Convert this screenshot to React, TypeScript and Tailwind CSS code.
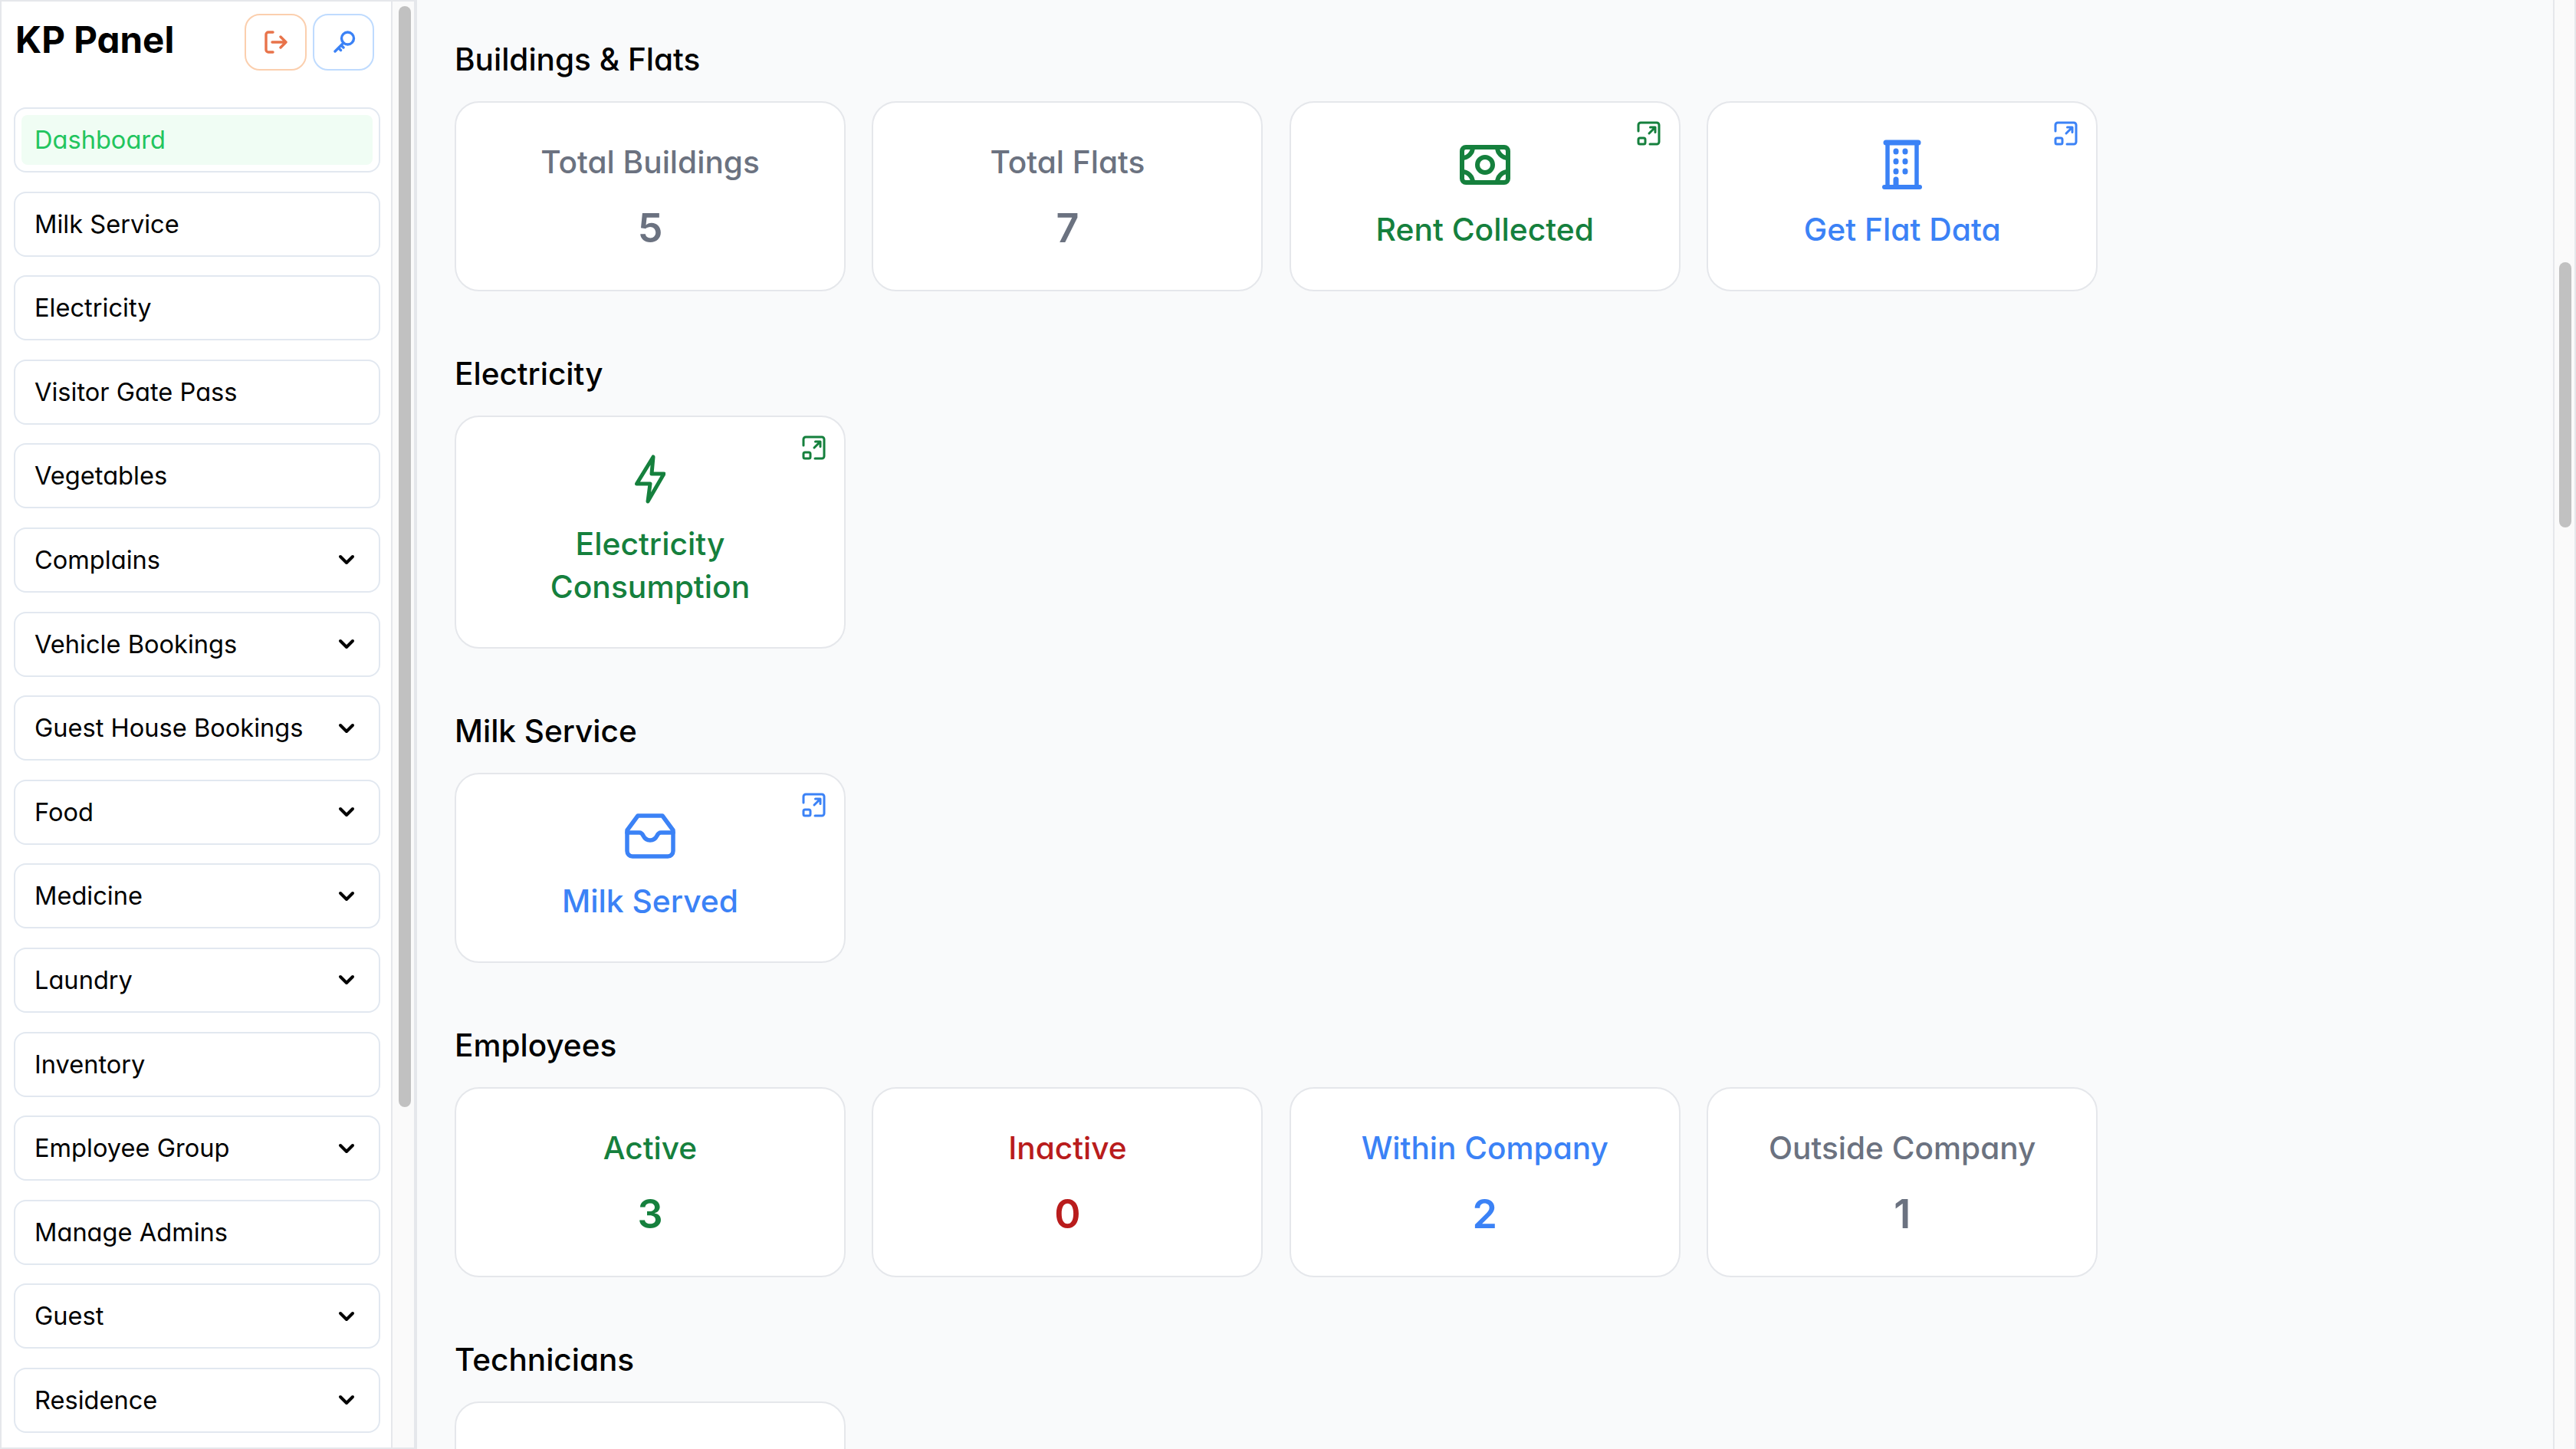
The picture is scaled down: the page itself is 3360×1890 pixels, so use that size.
import { ChevronDown } from "lucide-react";

type Tone = "gray" | "green" | "blue" | "red";

const toneClass: Record<Tone, string> = {
  gray: "text-[#6b7280]",
  green: "text-[#15803d]",
  blue: "text-[#3b82f6]",
  red: "text-[#b91c1c]",
};

const menu = [
  { label: "Milk Service" },
  { label: "Electricity" },
  { label: "Visitor Gate Pass" },
  { label: "Vegetables" },
  { label: "Complains", sub: true },
  { label: "Vehicle Bookings", sub: true },
  { label: "Guest House Bookings", sub: true },
  { label: "Food", sub: true },
  { label: "Medicine", sub: true },
  { label: "Laundry", sub: true },
  { label: "Inventory" },
  { label: "Employee Group", sub: true },
  { label: "Manage Admins" },
  { label: "Guest", sub: true },
  { label: "Residence", sub: true },
];

function OpenIcon() {
  return (
    <svg viewBox="0 0 32 32" fill="none" stroke="currentColor" strokeWidth="3" strokeLinecap="round" strokeLinejoin="round" className="absolute top-[24px] right-[23px] w-[32px] h-[32px]">
      <path d="M2 13V5a3 3 0 0 1 3-3h21a3 3 0 0 1 3 3v22a3 3 0 0 1-3 3h-9" />
      <rect x="2" y="22" width="9" height="8" rx="2" />
      <path d="M16 16l8-8M17.5 8H24v6.5" />
    </svg>
  );
}

function CashIcon() {
  return (
    <svg viewBox="0 0 66 52" fill="none" stroke="currentColor" strokeWidth="6" strokeLinejoin="round" className="w-[66px] h-[52px]">
      <rect x="3" y="3" width="60" height="46" rx="5" />
      <circle cx="33" cy="26" r="10" />
      <path d="M3 17A14 14 0 0 0 17 3M49 3A14 14 0 0 0 63 17M63 35A14 14 0 0 0 49 49M17 49A14 14 0 0 0 3 35" />
    </svg>
  );
}

function BuildingIcon() {
  return (
    <svg viewBox="0 0 52 66" fill="none" stroke="currentColor" strokeLinecap="round" className="w-[52px] h-[66px]">
      <path d="M3 62h46" strokeWidth="6" />
      <path d="M7 62V4h38v58" strokeWidth="5.5" />
      <path d="M5 4h42" strokeWidth="7" />
      <path d="M18 15v1M30 15v1M18 28v1M30 28v1M18 41v1M30 41v1M18 52v8" strokeWidth="7" strokeLinecap="round" />
    </svg>
  );
}

function BoltIcon() {
  return (
    <svg viewBox="0 0 40 64" fill="none" stroke="currentColor" strokeWidth="5" strokeLinejoin="round" strokeLinecap="round" className="w-[40px] h-[64px]">
      <path d="M24 3L22 25H38L17 61L20 38H2.5Z" />
    </svg>
  );
}

function InboxIcon() {
  return (
    <svg viewBox="0 0 66 60" fill="none" stroke="currentColor" strokeWidth="5.5" strokeLinejoin="round" strokeLinecap="round" className="w-[66px] h-[60px]">
      <path d="M17 3H49L63 22V49a7 7 0 0 1-7 7H10a7 7 0 0 1-7-7V22Z" />
      <path d="M3 25H19c3 0 4 2 5 4 2 4 5 6 9 6s7-2 9-6c1-2 2-4 5-4H63" />
    </svg>
  );
}

function StatCard({ title, value, tone }: { title: string; value: string; tone: Tone }) {
  return (
    <div className={`h-[248px] bg-white border-2 border-[#e5e7eb] rounded-[32px] flex flex-col items-center pt-[48px] ${toneClass[tone]}`}>
      <div className="text-[40.6px] leading-[60px] font-medium">{title}</div>
      <div className="text-[52px] leading-[64px] font-semibold mt-[24px]">{value}</div>
    </div>
  );
}

function LinkCard({ title, tone, icon, tall }: { title: string; tone: Tone; icon: React.ReactNode; tall?: boolean }) {
  return (
    <div className={`relative bg-white border-2 border-[#e5e7eb] rounded-[32px] flex flex-col items-center pt-[45px] ${tall ? "h-[304px]" : "h-[248px]"} ${toneClass[tone]}`}>
      <OpenIcon />
      <div className="h-[72px] flex items-center justify-center">{icon}</div>
      <div className="text-[40.8px] leading-[56px] font-medium text-center w-[330px] mt-[20px]">{title}</div>
    </div>
  );
}

function Section({ title, children }: { title: string; children: React.ReactNode }) {
  return (
    <section className="mb-[78px]">
      <h2 className="text-[40.5px] leading-[60px] font-medium text-black mb-[24px]">{title}</h2>
      <div className="grid grid-cols-[repeat(4,510px)] gap-[34.4px]">{children}</div>
    </section>
  );
}

export default function App() {
  return (
    <div className="w-[3360px] h-[1890px] overflow-hidden flex bg-[#f9fafb] font-['Inter',sans-serif] [font-feature-settings:'cv11'] text-black border-r-2 border-[#e5e7eb]">
      <aside className="w-[512px] shrink-0 bg-white border-2 border-[#e5e7eb] pl-[16px] pr-[14px] pt-[14px]">
        <div className="flex items-start h-[124px] pt-[2px]">
          <h1 className="text-[47.5px] leading-[68px] font-bold ml-[2px]">KP Panel</h1>
          <div className="ml-auto flex gap-[8px] mr-[8px]">
            <button className="w-[81px] h-[74px] flex items-center justify-center border-2 border-[#fbcfae] rounded-[20px] text-[#e8734a]">
              <svg viewBox="0 0 30 30" fill="none" stroke="currentColor" strokeWidth="3.4" strokeLinecap="round" strokeLinejoin="round" className="w-[30px] h-[30px]">
                <path d="M11 2H5a3 3 0 0 0-3 3v20a3 3 0 0 0 3 3h6" />
                <path d="M10 15h18M21 8l7 7-7 7" />
              </svg>
            </button>
            <button className="w-[80px] h-[74px] flex items-center justify-center border-2 border-[#bfdbfe] rounded-[20px] text-[#3b82f6]">
              <svg viewBox="0 0 30 30" fill="none" stroke="currentColor" strokeWidth="3.4" strokeLinecap="round" strokeLinejoin="round" className="w-[30px] h-[30px] ml-[3px]">
                <circle cx="18.5" cy="10" r="8" />
                <path d="M13 16L2 27M6.5 22.5l3 3M10 19l3 3" />
              </svg>
            </button>
          </div>
        </div>
        <nav className="flex flex-col gap-[24.6px]">
          <div className="h-[85px] border-2 border-[#e2e8f0] rounded-[16px] p-[8px] flex">
            <div className="flex-1 bg-[#f0fdf4] rounded-[8px] pl-[17px] flex items-center text-[32.6px] text-[#22c55e]">Dashboard</div>
          </div>
          {menu.map((m) => (
            <div key={m.label} className="h-[85px] border-2 border-[#e2e8f0] rounded-[16px] pl-[25px] pr-[26px] flex items-center justify-between text-[32.6px]">
              <span>{m.label}</span>
              {m.sub && <ChevronDown className="w-[32px] h-[32px]" strokeWidth={3} />}
            </div>
          ))}
        </nav>
      </aside>
      <div className="w-[32px] shrink-0 bg-[#fafafa] border-t-2 border-r-[4px] border-b-2 border-[#e5e7eb] pl-[8px] pt-[6px]">
        <div className="w-[16px] h-[1436px] rounded-full bg-[#c1c1c1]" />
      </div>
      <main className="flex-1 pl-[49px] pt-[48px] overflow-hidden relative">
        <Section title="Buildings & Flats">
          <StatCard title="Total Buildings" value="5" tone="gray" />
          <StatCard title="Total Flats" value="7" tone="gray" />
          <LinkCard title="Rent Collected" tone="green" icon={<CashIcon />} />
          <LinkCard title="Get Flat Data" tone="blue" icon={<BuildingIcon />} />
        </Section>
        <Section title="Electricity">
          <LinkCard title="Electricity Consumption" tone="green" tall icon={<BoltIcon />} />
        </Section>
        <Section title="Milk Service">
          <LinkCard title="Milk Served" tone="blue" icon={<InboxIcon />} />
        </Section>
        <Section title="Employees">
          <StatCard title="Active" value="3" tone="green" />
          <StatCard title="Inactive" value="0" tone="red" />
          <StatCard title="Within Company" value="2" tone="blue" />
          <StatCard title="Outside Company" value="1" tone="gray" />
        </Section>
        <Section title="Technicians">
          <StatCard title="" value="" tone="gray" />
        </Section>
        <div className="absolute right-0 top-0 bottom-0 w-[28px] bg-[#fafafa] border-l-2 border-[#e5e7eb]">
          <div className="absolute top-[342px] left-[6px] w-[16px] h-[346px] rounded-full bg-[#c1c1c1]" />
        </div>
      </main>
    </div>
  );
}
